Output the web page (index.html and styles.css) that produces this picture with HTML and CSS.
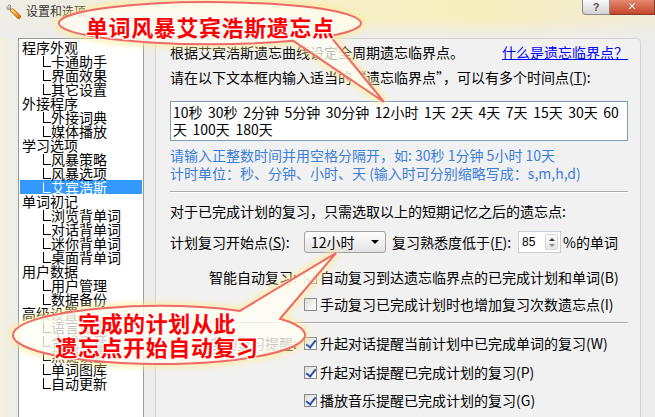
FILE: index.html
```html
<!DOCTYPE html>
<html lang="zh-CN">
<head>
<meta charset="utf-8">
<title>设置和选项</title>
<link rel="stylesheet" href="styles.css">
</head>
<body>
<div class="win">
  <div class="titlebar">
    <svg class="ticon" viewBox="0 0 16 16" width="16" height="16">
      <defs>
        <linearGradient id="hg" x1="0" y1="0" x2="1" y2="1">
          <stop offset="0" stop-color="#ffe070"/>
          <stop offset="1" stop-color="#e8780c"/>
        </linearGradient>
        <linearGradient id="mg" x1="0" y1="0" x2="1" y2="1">
          <stop offset="0" stop-color="#f4f4f4"/>
          <stop offset="1" stop-color="#7a7a7a"/>
        </linearGradient>
      </defs>
      <path d="M1.5 4.5 L4.5 1.5 L6 3 L5 5 L7.5 7.5 L6.5 8.5 L4 6 L2.5 6.5 Z" fill="url(#mg)" stroke="#666" stroke-width="0.6"/>
      <line x1="7.5" y1="7.5" x2="13.8" y2="13.8" stroke="#b85a08" stroke-width="4.2" stroke-linecap="round"/>
      <line x1="7.5" y1="7.5" x2="13.8" y2="13.8" stroke="url(#hg)" stroke-width="2.8" stroke-linecap="round"/>
    </svg>
    <span class="ttl">设置和选项</span>
    <div class="tbtns">
      <span class="btn-help">?</span>
      <span class="btn-close">✕</span>
    </div>
  </div>

  <div class="main">
    <ul class="tree">
      <li>程序外观</li>
      <li class="c">卡通助手</li>
      <li class="c">界面效果</li>
      <li class="c">其它设置</li>
      <li>外接程序</li>
      <li class="c">外接词典</li>
      <li class="c">媒体播放</li>
      <li>学习选项</li>
      <li class="c">风暴策略</li>
      <li class="c">风暴选项</li>
      <li class="c sel">艾宾浩斯</li>
      <li>单词初记</li>
      <li class="c">浏览背单词</li>
      <li class="c">对话背单词</li>
      <li class="c">迷你背单词</li>
      <li class="c">桌面背单词</li>
      <li>用户数据</li>
      <li class="c">用户管理</li>
      <li class="c">数据备份</li>
      <li>高级设置</li>
      <li class="c">语言设置</li>
      <li class="c">合成语音</li>
      <li class="c">热键设置</li>
      <li class="c">单词图库</li>
      <li class="c">自动更新</li>
    </ul>

    <div class="panel">
      <div class="r1">
        <span>根据艾宾浩斯遗忘曲线设定全周期遗忘临界点。</span>
        <a class="link">什么是遗忘临界点？</a>
      </div>
      <div class="r2">请在以下文本框内输入适当的“遗忘临界点”，可以有多个时间点(<u>T</u>):</div>
      <div class="tbox">10秒 30秒 2分钟 5分钟 30分钟 12小时 1天 2天 4天 7天 15天 30天 60<br>天 100天 180天</div>
      <div class="hint first">请输入正整数时间并用空格分隔开，如: 30秒 1分钟 5小时 10天</div>
      <div class="hint">计时单位：秒、分钟、小时、天 (输入时可分别缩略写成：s,m,h,d)</div>
      <div class="sep"></div>
      <div class="r3">对于已完成计划的复习，只需选取以上的短期记忆之后的遗忘点:</div>
      <div class="crow">
        <span class="lbl left">计划复习开始点(<u>S</u>):</span>
        <span class="combo"><span class="cv">12小时</span><span class="carr"></span></span>
        <span class="cmid">复习熟悉度低于(<u>F</u>):</span>
        <span class="spin"><span class="sv">85</span><span class="sbtn"><span class="up"></span><span class="dn"></span></span></span>
        <span class="pct">%的单词</span>
      </div>
      <div class="frow fa">
        <span class="lbl">智能自动复习:</span>
        <span class="cb on"></span>
        <span>自动复习到达遗忘临界点的已完成计划和单词(B)</span>
      </div>
      <div class="frow fb">
        <span class="lbl"></span>
        <span class="cb"></span>
        <span>手动复习已完成计划时也增加复习次数遗忘点(I)</span>
      </div>
      <div class="sep sep2"></div>
      <div class="frow fc">
        <span class="lbl">自动复习提醒:</span>
        <span class="cb on"></span>
        <span>升起对话提醒当前计划中已完成单词的复习(W)</span>
      </div>
      <div class="frow fd">
        <span class="lbl"></span>
        <span class="cb on"></span>
        <span>升起对话提醒已完成计划的复习(P)</span>
      </div>
      <div class="frow fe">
        <span class="lbl"></span>
        <span class="cb on"></span>
        <span>播放音乐提醒已完成计划的复习(G)</span>
      </div>
    </div>
  </div>

  <svg class="overlay" width="655" height="417" viewBox="0 0 655 417">
    <defs>
      <filter id="blur" x="-20%" y="-50%" width="140%" height="200%">
        <feGaussianBlur stdDeviation="3"/>
      </filter>
    </defs>
    <path d="M293 40.7 L384 102 L330 35.9 A151 21 0 1 0 293 40.7 Z" fill="none" stroke="rgba(255,236,150,0.8)" stroke-width="7" filter="url(#blur)"/>
    <path d="M293 40.7 L384 102 L330 35.9 A151 21 0 1 0 293 40.7 Z" fill="rgba(255,255,246,0.72)" stroke="#ee6a6a" stroke-width="2"/>
    <path d="M240 310.9 L336 253 L280 318.8 A146 29 0 1 1 240 310.9 Z" fill="none" stroke="rgba(255,236,150,0.8)" stroke-width="7" filter="url(#blur)"/>
    <path d="M240 310.9 L336 253 L280 318.8 A146 29 0 1 1 240 310.9 Z" fill="rgba(255,255,246,0.78)" stroke="#ee6a6a" stroke-width="2"/>
  </svg>
  <div class="co co1">单词风暴艾宾浩斯遗忘点</div>
  <div class="co co2">完成的计划从此<br>遗忘点开始自动复习</div>
</div>
</body>
</html>
```

FILE: styles.css
```css
* { box-sizing: border-box; }

body {
  margin: 0;
  width: 655px;
  height: 417px;
  overflow: hidden;
  font-family: "Noto Sans CJK SC", "Liberation Sans", sans-serif;
  font-size: 14px;
  color: #000;
  background: #ececec;
}

.win {
  position: relative;
  width: 655px;
  height: 417px;
  overflow: hidden;
  background: linear-gradient(90deg, #f4f1de 0, #efeee7 12px, #ececec 18px);
}

/* title bar */
.titlebar {
  height: 38px;
  display: flex;
  align-items: flex-start;
  background:
    linear-gradient(180deg, rgba(236,236,236,0) 50%, #ececec 100%),
    linear-gradient(90deg, #eeede6 0%, #f2eed8 30%, #f7efc4 58%, #f7eebe 75%, #f0ecd8 100%);
}

.ticon { margin: 3px 0 0 5px; flex: none; }

.ttl {
  margin: 3px 0 0 5px;
  font-size: 12px;
  line-height: 16px;
  color: #333;
}

.tbtns { margin-left: auto; display: flex; }

.btn-help {
  width: 28px;
  height: 15px;
  padding-top: 1px;
  border: 1px solid #8a8a8a;
  border-top: none;
  border-radius: 0 0 0 4px;
  background: linear-gradient(180deg, #fafafa, #d2d2d2);
  color: #555;
  font-family: "Liberation Sans", sans-serif;
  font-weight: bold;
  font-size: 11px;
  line-height: 12px;
  text-align: center;
}

.btn-close {
  width: 45px;
  height: 15px;
  padding-top: 1px;
  border: 1px solid #8a3a2a;
  border-top: none;
  border-left: none;
  background: linear-gradient(180deg, #e58a6e, #c4452c);
  color: #f6f6f6;
  font-family: "DejaVu Sans", sans-serif;
  font-weight: bold;
  font-size: 11px;
  line-height: 12px;
  text-align: center;
  text-shadow: 0 0 1px #7a2a1a;
}

/* body */
.main {
  display: flex;
  gap: 11px;
  padding-left: 18px;
  height: 379px;
}

.tree {
  flex: none;
  width: 126px;
  height: 400px;
  margin: 0;
  padding: 1px 1px 0;
  list-style: none;
  background: #fff;
  border: 1px solid #9a9a9a;
}

.tree li {
  height: 14px;
  line-height: 14px;
  padding-left: 2px;
  white-space: nowrap;
}

.tree li.c::before {
  content: "";
  display: inline-block;
  width: 7px;
  height: 10px;
  margin-left: 21px;
  border-left: 1px solid #000;
  border-bottom: 1px solid #000;
}

.tree li.sel { background: #3399ff; color: #fff; }
.tree li.sel::before { border-color: #fff; }

.panel {
  flex: none;
  width: 486px;
  height: 400px;
  border: 1px solid #d4d4cc;
  border-radius: 0 4px 0 0;
  background: #f1f1f1;
  padding: 3px 12px 0 14px;
}

.r1 {
  display: flex;
  justify-content: space-between;
  height: 20px;
  line-height: 20px;
}

.link { color: #0000ff; text-decoration: underline; }

.r2 { margin-top: 5px; height: 20px; line-height: 20px; }

.tbox {
  margin-top: 14px;
  height: 40px;
  border: 1px solid #7f9db9;
  background: #fff;
  padding: 2px 2px;
  line-height: 17px;
  word-spacing: 2.4px;
  white-space: nowrap;
}

.hint { color: #3b7fda; height: 18px; line-height: 18px; white-space: nowrap; }
.hint.first { margin-top: 5px; }

.sep {
  margin-top: 9px;
  border-top: 1px solid #a9a9a9;
  border-bottom: 1px solid #fff;
}
.sep2 { margin-top: 8px; }

.r3 { margin-top: 8px; height: 20px; line-height: 20px; }

.crow {
  margin-top: 10px;
  height: 22px;
  display: flex;
  align-items: center;
  white-space: nowrap;
}

.lbl {
  flex: none;
  width: 134px;
  padding-right: 7px;
  text-align: right;
  white-space: nowrap;
}
.lbl.left { text-align: left; padding-right: 0; }

.combo {
  flex: none;
  width: 82px;
  height: 22px;
  display: flex;
  align-items: center;
  justify-content: space-between;
  padding: 0 6px 0 6px;
  border: 1px solid #a2a2a2;
  border-radius: 3px;
  background: linear-gradient(180deg, #fdfdfd 0%, #f1f1f1 50%, #e2e2e2 100%);
}

.carr {
  width: 0;
  height: 0;
  border-left: 4px solid transparent;
  border-right: 4px solid transparent;
  border-top: 4px solid #000;
}

.cmid { flex: none; width: 132px; padding-left: 6px; }

.spin {
  flex: none;
  width: 43px;
  height: 22px;
  display: flex;
  align-items: center;
  justify-content: space-between;
  border: 1px solid #c8ced6;
  background: #fff;
  padding: 0 2px 0 2px;
}

.sv {
  font-family: "Liberation Sans", sans-serif;
  font-size: 12px;
  padding-left: 1px;
}

.sbtn {
  width: 13px;
  height: 16px;
  display: flex;
  flex-direction: column;
  align-items: center;
  justify-content: center;
  gap: 3px;
  border: 1px solid #d6d6d6;
  border-radius: 2px;
  background: linear-gradient(180deg, #fafafa, #e6e6e6);
}

.up {
  width: 0; height: 0;
  border-left: 3px solid transparent;
  border-right: 3px solid transparent;
  border-bottom: 3px solid #333;
}

.dn {
  width: 0; height: 0;
  border-left: 3px solid transparent;
  border-right: 3px solid transparent;
  border-top: 3px solid #888;
}

.pct { padding-left: 2px; }

.frow {
  height: 20px;
  display: flex;
  align-items: center;
  white-space: nowrap;
}
.fa { margin-top: 14px; }
.fb { margin-top: 7px; }
.fc { margin-top: 9px; }
.fd { margin-top: 9px; }
.fe { margin-top: 8px; }

.cb {
  flex: none;
  position: relative;
  width: 13px;
  height: 13px;
  margin-right: 3px;
  border: 1px solid #8b8b8b;
  background: linear-gradient(135deg, #dcdcd6 0%, #f6f6f4 70%, #ffffff 100%);
}

.cb.on::after {
  content: "";
  position: absolute;
  left: 3px;
  top: 0px;
  width: 4px;
  height: 8px;
  border: solid #2c52a8;
  border-width: 0 2px 2px 0;
  transform: rotate(38deg);
}

/* callouts */
.overlay {
  position: absolute;
  left: 0;
  top: 0;
  pointer-events: none;
}

.co {
  position: absolute;
  color: #ff0000;
  font-weight: 700;
  font-size: 22px;
  letter-spacing: 0.6px;
  white-space: nowrap;
  text-shadow: -1px -1px 0 #fff, 1px -1px 0 #fff, -1px 1px 0 #fff, 1px 1px 0 #fff, 0 0 3px #fff;
}

.co1 { left: 86px; top: 13px; line-height: 26px; }

.co2 {
  left: 40px;
  top: 310px;
  width: 234px;
  text-align: center;
  line-height: 24px;
}
```
